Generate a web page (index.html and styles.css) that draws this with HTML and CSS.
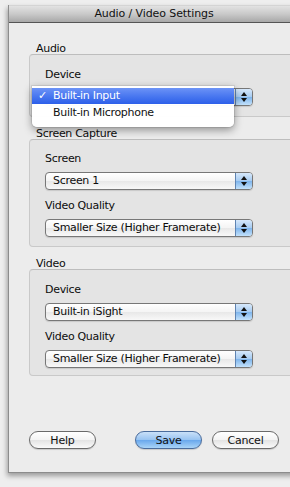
FILE: index.html
```html
<!DOCTYPE html>
<html lang="en">
<head>
    <meta charset="UTF-8">
    <meta name="viewport" content="width=device-width, initial-scale=1.0">
    <title>Audio / Video Settings</title>
    <link rel="stylesheet" href="styles.css">
</head>
<body>
    <div class="window">
        <div class="titlebar">Audio / Video Settings</div>

        <div class="content">
            <div class="group-title">Audio</div>
            <div class="group audio">
                <div class="field-label">Device</div>
                <div class="popup-wrap">
                    <div class="popup-button">
                        <span class="popup-text"></span>
                        <span class="stepper"><i class="up"></i><i class="down"></i></span>
                    </div>
                    <div class="menu">
                        <div class="menu-item selected"><span class="check">&#10003;</span>Built-in Input</div>
                        <div class="menu-item">Built-in Microphone</div>
                    </div>
                </div>
            </div>

            <div class="group-title">Screen Capture</div>
            <div class="group">
                <div class="field-label">Screen</div>
                <div class="popup-button">
                    <span class="popup-text">Screen 1</span>
                    <span class="stepper"><i class="up"></i><i class="down"></i></span>
                </div>
                <div class="field-label">Video Quality</div>
                <div class="popup-button">
                    <span class="popup-text">Smaller Size (Higher Framerate)</span>
                    <span class="stepper"><i class="up"></i><i class="down"></i></span>
                </div>
            </div>

            <div class="group-title">Video</div>
            <div class="group video">
                <div class="field-label">Device</div>
                <div class="popup-button">
                    <span class="popup-text">Built-in iSight</span>
                    <span class="stepper"><i class="up"></i><i class="down"></i></span>
                </div>
                <div class="field-label">Video Quality</div>
                <div class="popup-button">
                    <span class="popup-text">Smaller Size (Higher Framerate)</span>
                    <span class="stepper"><i class="up"></i><i class="down"></i></span>
                </div>
            </div>

            <div class="buttons">
                <button class="btn">Help</button>
                <span class="spacer"></span>
                <button class="btn default">Save</button>
                <button class="btn">Cancel</button>
            </div>
        </div>
    </div>
</body>
</html>
```

FILE: styles.css
```css
body {
    margin: 0;
    background: #eeeeee;
    font-family: "DejaVu Sans", "Liberation Sans", sans-serif;
    font-size: 11px;
    letter-spacing: -0.3px;
    color: #0c0c0c;
    overflow: hidden;
    height: 487px;
}

.window {
    margin: 5px 0 0 8px;
    width: 300px;
    height: 467px;
    background: #ececec;
    border-left: 1px solid #8c8c8c;
    border-bottom: 1px solid #8c8c8c;
    box-shadow: -1px 3px 5px rgba(0, 0, 0, 0.35);
    display: flex;
    flex-direction: column;
}

.titlebar {
    height: 16px;
    line-height: 16px;
    padding-right: 10px;
    text-align: center;
    font-size: 11px;
    letter-spacing: -0.1px;
    color: #111;
    background: linear-gradient(#e2e2e2, #c9c9c9 50%, #a8a8a8);
    border-top: 1px solid #d4d4d4;
    border-bottom: 1px solid #555;
}

.content {
    padding: 17px 0 0 20px;
    flex: 1;
    display: flex;
    flex-direction: column;
}

.group-title {
    padding-left: 7px;
    line-height: 17px;
    height: 14px;
}

.group {
    width: 248px;
    background: #e4e4e4;
    border: 1px solid #c9c9c9;
    border-top-color: #bdbdbd;
    border-radius: 4px;
    padding: 10px 0 9px 15px;
    margin-bottom: 8px;
}

.group.audio {
    padding: 11px 0 10px 15px;
}

.group.video {
    padding: 11px 0 7px 15px;
}

.field-label {
    line-height: 17px;
    height: 14px;
    margin-bottom: 8px;
}

.popup-wrap {
    position: relative;
}

.popup-button {
    position: relative;
    width: 206px;
    height: 16px;
    border: 1px solid #777;
    border-radius: 4px;
    background: linear-gradient(#ffffff, #f4f4f4 50%, #e8e8e8 52%, #f8f8f8);
    box-shadow: 0 1px 1px rgba(0, 0, 0, 0.12);
    display: flex;
    align-items: center;
    margin-bottom: 7px;
}

.group .popup-button:last-child,
.popup-wrap .popup-button {
    margin-bottom: 0;
}

.popup-text {
    flex: 1;
    padding-left: 7px;
    line-height: 16px;
    white-space: nowrap;
}

.stepper {
    width: 16px;
    height: 16px;
    border-left: 1px solid #5f84b2;
    border-radius: 0 3px 3px 0;
    background: linear-gradient(#d6e8fb, #a6cbf1 50%, #7fb5ec 52%, #c2e1fb);
    display: flex;
    flex-direction: column;
    align-items: center;
    justify-content: center;
    gap: 2px;
}

.stepper i {
    width: 0;
    height: 0;
    border-left: 3px solid transparent;
    border-right: 3px solid transparent;
}

.stepper .up {
    border-bottom: 4px solid #111;
}

.stepper .down {
    border-top: 4px solid #111;
}

.menu {
    position: absolute;
    left: -13px;
    top: -2px;
    width: 202px;
    padding: 2px 0 6px;
    background: rgba(255, 255, 255, 0.97);
    border-radius: 0 0 5px 5px;
    box-shadow: 0 3px 8px rgba(0, 0, 0, 0.4), 0 0 0 1px rgba(0, 0, 0, 0.08);
}

.menu-item {
    position: relative;
    height: 16px;
    line-height: 16px;
    padding-left: 21px;
    color: #111;
}

.menu-item + .menu-item {
    height: 17px;
    line-height: 18px;
}

.menu-item.selected {
    color: #fff;
    background: linear-gradient(#6c93f6, #4a78f0 50%, #2c5fe9);
}

.check {
    position: absolute;
    left: 6px;
    top: 0;
}

.buttons {
    display: flex;
    width: 250px;
    margin-top: 47px;
}

.spacer {
    flex: 1;
}

.btn {
    width: 67px;
    height: 18px;
    padding: 0;
    font-family: inherit;
    font-size: 11px;
    letter-spacing: -0.2px;
    color: #111;
    border: 1px solid #6a6a6a;
    border-radius: 9px;
    background: linear-gradient(#ffffff, #f3f3f3 50%, #e4e4e4 52%, #fafafa);
    box-shadow: 0 1px 1px rgba(0, 0, 0, 0.15);
}

.btn + .btn {
    margin-left: 10px;
}

.btn.default {
    border-color: #4a6c9c;
    background: linear-gradient(#c9e0f8, #97c3f1 50%, #6aa8ec 52%, #a9d4f8);
}
```
